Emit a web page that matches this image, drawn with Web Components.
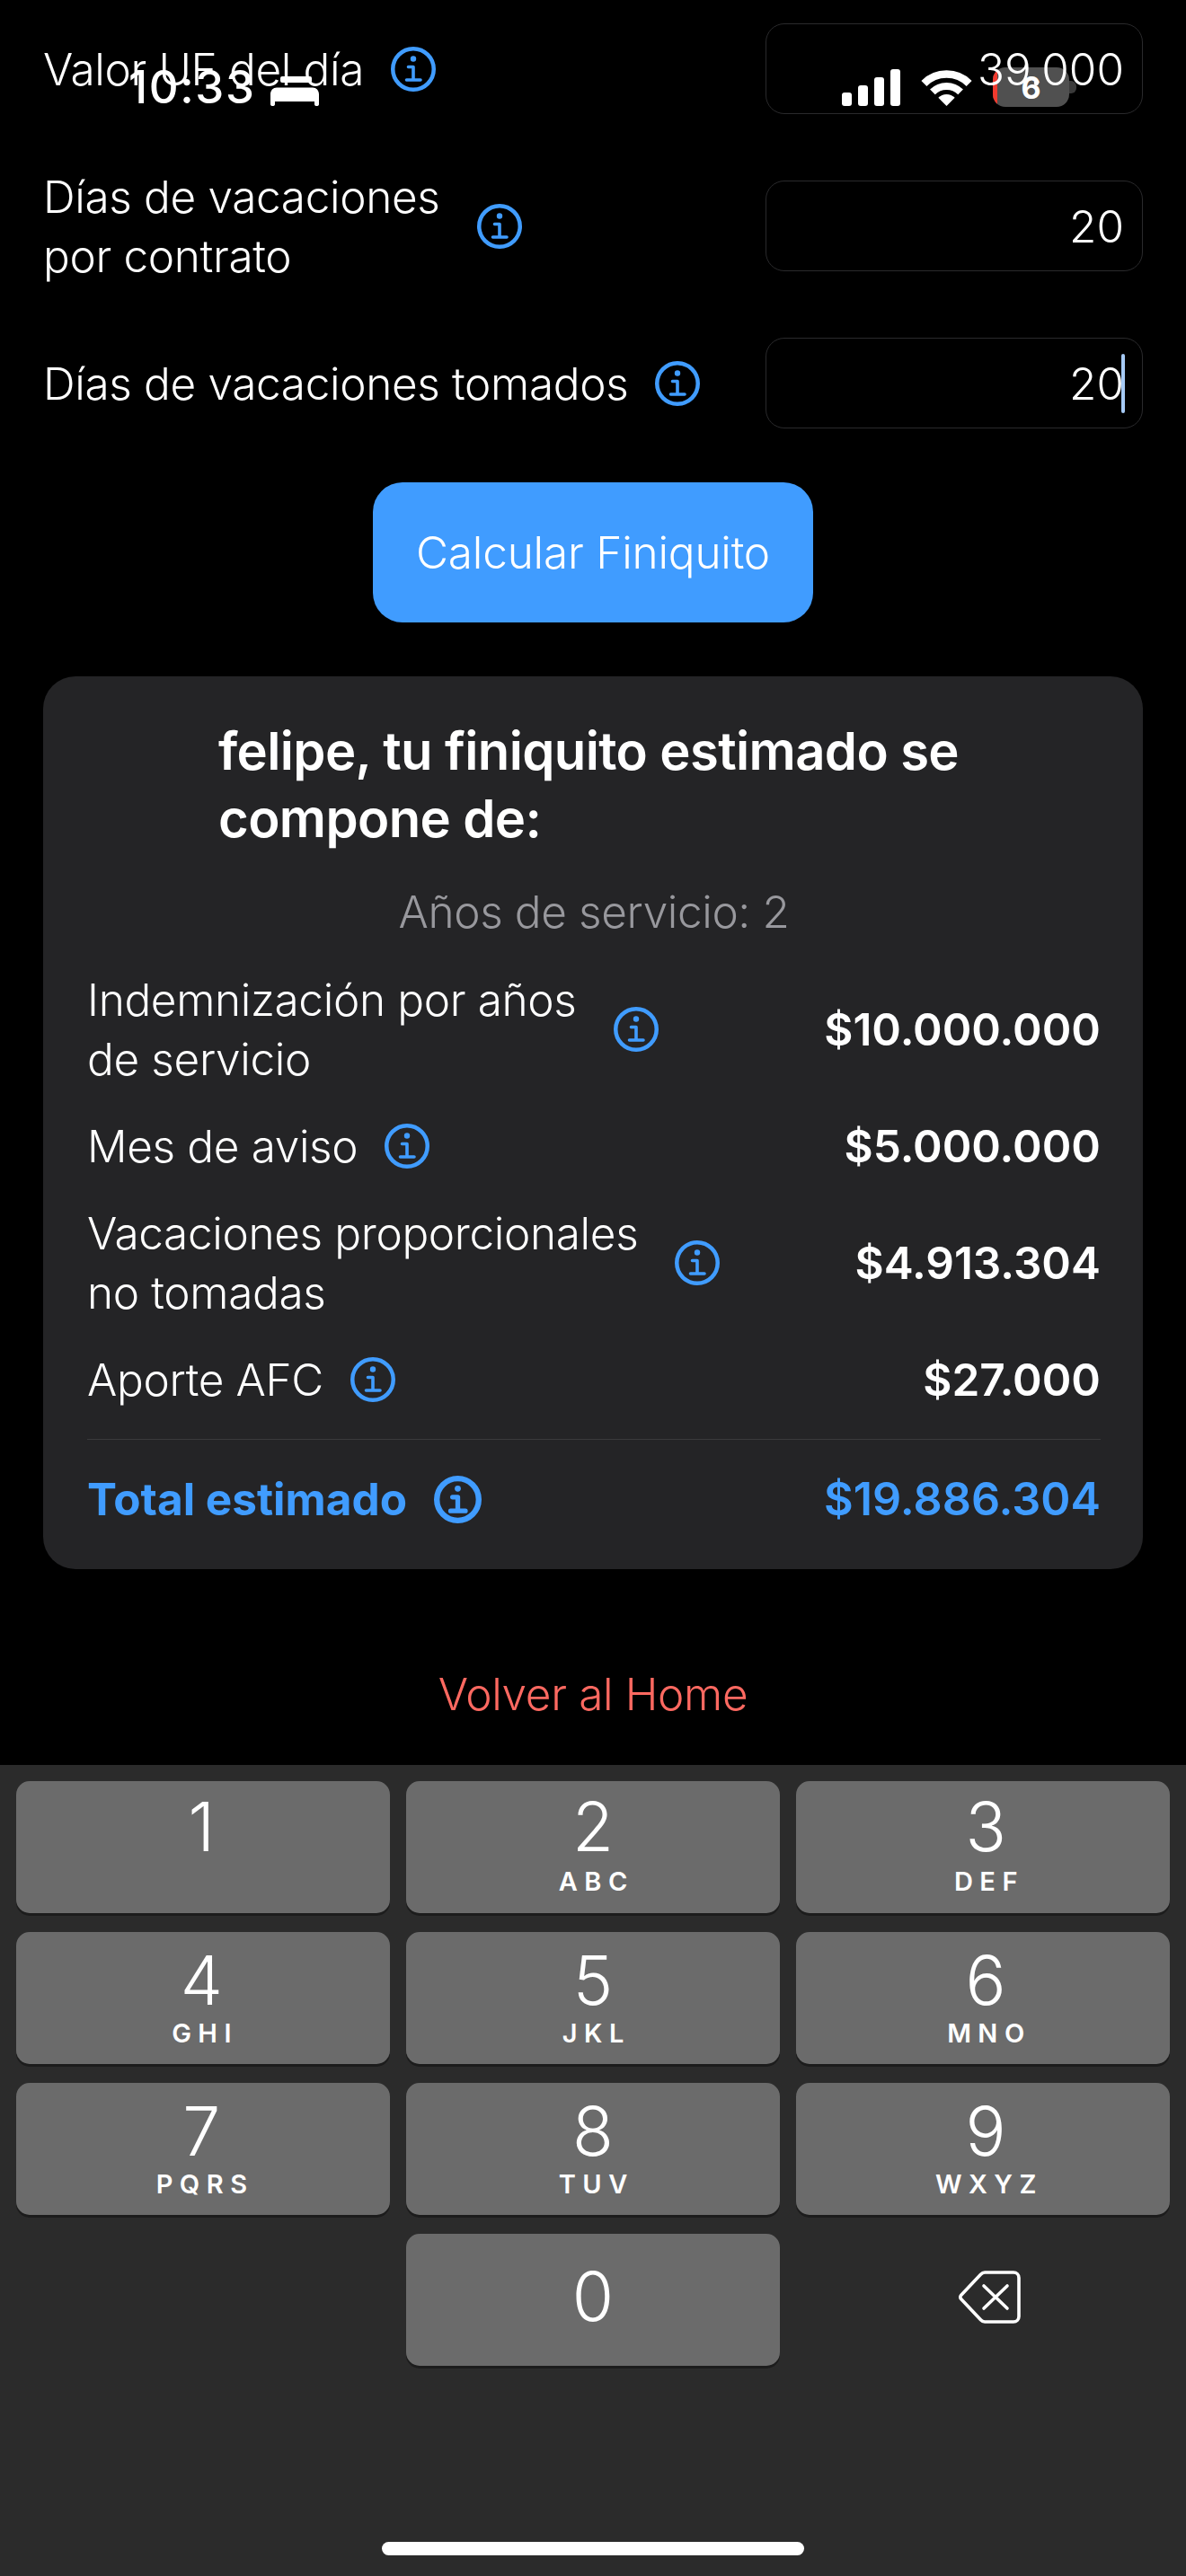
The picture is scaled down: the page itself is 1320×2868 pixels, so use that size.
<!DOCTYPE html>
<html lang="es">
<head>
<meta charset="utf-8">
<title>Finiquito</title>
<style>
    html, body { margin: 0; padding: 0; background: #000; }
    body { width: 1320px; height: 2868px; overflow: hidden; font-family: Inter, "Liberation Sans", sans-serif; color: #fff; }
</style>
</head>
<body>
<finiquito-page>
    <status-bar></status-bar>
    <field-row value="39.000">Valor UF del día</field-row>
    <field-row value="20" wrapped>Días de vacaciones<br>por contrato</field-row>
    <field-row value="20" focused>Días de vacaciones tomados</field-row>
    <calc-button>Calcular Finiquito</calc-button>
    <result-card>
        <span slot="title">felipe, tu finiquito estimado se<br>compone de:</span>
        <span slot="years">Años de servicio: 2</span>
        <result-row value="$10.000.000" wrapped>Indemnización por años<br>de servicio</result-row>
        <result-row value="$5.000.000">Mes de aviso</result-row>
        <result-row value="$4.913.304" wrapped>Vacaciones proporcionales<br>no tomadas</result-row>
        <result-row value="$27.000">Aporte AFC</result-row>
        <result-row value="$19.886.304" total>Total estimado</result-row>
    </result-card>
    <back-link>Volver al Home</back-link>
    <num-keyboard></num-keyboard>
</finiquito-page>

<script>
class InfoIcon extends HTMLElement {
    constructor() {
        super();
        this.shadow = this.attachShadow({ mode: "open" });
        var bold = this.hasAttribute("bold");
        var size = bold ? 53 : 50;
        var ring = bold ? 6 : 4.5;
        var stem = bold ? 5 : 3.6;
        this.shadow.innerHTML = `
        <style>
            :host { display: block; flex: none; width: ${size}px; height: ${size}px; }
            svg { display: block; }
        </style>
        <svg width="${size}" height="${size}" viewBox="0 0 50 50" fill="none" stroke="#409cff">
            <circle cx="25" cy="25" r="${25 - ring / 2}" stroke-width="${ring}"/>
            <circle cx="25" cy="13.5" r="3.2" fill="#409cff" stroke="none"/>
            <path d="M19.5 22.5H25V37M17.5 37H33" stroke-width="${stem}" stroke-linecap="round" stroke-linejoin="round"/>
        </svg>
        `;
    }
}

class StatusBar extends HTMLElement {
    constructor() {
        super();
        this.shadow = this.attachShadow({ mode: "open" });
        this.shadow.innerHTML = `
        <style>
            :host {
                position: absolute; top: 72px; left: 0; width: 1320px; height: 46px;
                display: flex; justify-content: space-between; align-items: flex-end;
                box-sizing: border-box; padding: 0 122px 0 143px;
            }
            .left, .right { display: flex; align-items: flex-end; }
            .left { gap: 16px; }
            .right { gap: 23px; }
            .time { font-size: 51px; line-height: 50px; font-weight: 500; letter-spacing: 1.6px; margin-bottom: -4px; }
            svg { display: block; }
            .battery { position: relative; width: 85px; height: 44px; border-radius: 14px; background: #505050; overflow: hidden;
                display: flex; align-items: center; justify-content: center; font-size: 34px; font-weight: 700; }
            .battery::before { content: ""; position: absolute; left: 0; top: 0; bottom: 0; width: 5px; background: #f03a2e; }
            .battery-wrap { display: flex; align-items: center; gap: 0; margin-bottom: -1px; }
            .cap { width: 8px; height: 14px; background: #3a3a3a; border-radius: 0 6px 6px 0; }
        </style>
        <div class="left">
            <span class="time">10:33</span>
            <svg width="54" height="33" viewBox="0 0 54 33" fill="#fff">
                <rect x="11" y="0" width="35" height="7" rx="2"/>
                <path d="M0 31V20C0 15.5 3 12.5 7 12.5H47C51 12.5 54 15.5 54 20V31C54 32.5 53 33 51.5 33C50 33 49 32.5 49 31V28H5V31C5 32.5 4 33 2.5 33C1 33 0 32.5 0 31Z"/>
            </svg>
        </div>
        <div class="right">
            <svg width="65" height="41" viewBox="0 0 65 41" fill="#fff">
                <rect x="0" y="26" width="11" height="15" rx="3"/>
                <rect x="18" y="18" width="11" height="23" rx="3"/>
                <rect x="36" y="9" width="11" height="32" rx="3"/>
                <rect x="54" y="0" width="11" height="41" rx="3"/>
            </svg>
            <svg width="57" height="40" viewBox="0 0 57 40" fill="none" stroke="#fff">
                <path d="M3.4 14.9A35.5 35.5 0 0 1 53.6 14.9" stroke-width="8.5"/>
                <path d="M12.9 24.4A22 22 0 0 1 44.1 24.4" stroke-width="8"/>
                <path d="M28.5 40L19.3 30.8A13 13 0 0 1 37.7 30.8Z" fill="#fff" stroke="none"/>
            </svg>
            <div class="battery-wrap"><div class="battery">6</div><div class="cap"></div></div>
        </div>
        `;
    }
}

class FieldRow extends HTMLElement {
    constructor() {
        super();
        this.shadow = this.attachShadow({ mode: "open" });
        var value = this.getAttribute("value");
        var caret = this.hasAttribute("focused") ? `<i class="caret"></i>` : "";
        this.shadow.innerHTML = `
        <style>
            :host { display: flex; align-items: center; justify-content: space-between; height: 101px; font-size: 49.5px; line-height: 66px; font-weight: 350; }
            .label { display: flex; align-items: center; gap: 30px; }
            :host([wrapped]) .label { gap: 41px; }
            .text { letter-spacing: -0.35px; }
            .box {
                position: relative; box-sizing: border-box; width: 420px; height: 101px; padding-right: 20px;
                border: 1.5px solid #2a2a2c; border-radius: 21px;
                display: flex; align-items: center; justify-content: flex-end;
            }
            .caret { position: absolute; right: 19px; top: 17px; width: 4px; height: 66px; border-radius: 2px; background: #a6caf5; }
        </style>
        <div class="label"><span class="text"><slot></slot></span><info-icon></info-icon></div>
        <div class="box">${value}${caret}</div>
        `;
    }
}

class CalcButton extends HTMLElement {
    constructor() {
        super();
        this.shadow = this.attachShadow({ mode: "open" });
        this.shadow.innerHTML = `
        <style>
            :host {
                display: flex; align-items: center; justify-content: center; align-self: center;
                width: 490px; height: 156px; margin-top: -14px; border-radius: 33px;
                background: #409cff; font-size: 49.5px; font-weight: 350; letter-spacing: -0.2px; color: #fff;
            }
        </style>
        <slot></slot>
        `;
    }
}

class ResultCard extends HTMLElement {
    constructor() {
        super();
        this.shadow = this.attachShadow({ mode: "open" });
        this.shadow.innerHTML = `
        <style>
            :host {
                display: flex; flex-direction: column; box-sizing: border-box; height: 994px; margin-top: -14px;
                padding: 46px 47px 0 49px; border-radius: 36px; background: #242426;
            }
            .title { margin: 0 0 0 146px; font-size: 58px; line-height: 75px; font-weight: 600; letter-spacing: -0.62px; }
            .years { margin: 33px 0 32px; text-align: center; font-size: 49.5px; line-height: 66px; font-weight: 350; letter-spacing: -0.4px; color: #98989d; }
            .rows { display: flex; flex-direction: column; gap: 31px; }
        </style>
        <div class="title"><slot name="title"></slot></div>
        <div class="years"><slot name="years"></slot></div>
        <div class="rows"><slot></slot></div>
        `;
    }
}

class ResultRow extends HTMLElement {
    constructor() {
        super();
        this.shadow = this.attachShadow({ mode: "open" });
        var total = this.hasAttribute("total");
        this.shadow.innerHTML = `
        <style>
            :host { display: flex; align-items: center; justify-content: space-between; font-size: 49.5px; line-height: 66px; font-weight: 350; }
            :host([total]) { color: #409cff; font-weight: 700; border-top: 1.5px solid #3a3a3c; padding-top: 33px; margin-top: 2px; }
            .label { display: flex; align-items: center; gap: 30px; }
            :host([wrapped]) .label { gap: 41px; }
            .text { letter-spacing: -0.35px; }
            :host([total]) .text { letter-spacing: 0; }
            .value { font-weight: 600; }
            :host([total]) .value { font-size: 50.3px; }
        </style>
        <div class="label"><span class="text"><slot></slot></span><info-icon ${total ? "bold" : ""}></info-icon></div>
        <div class="value">${this.getAttribute("value")}</div>
        `;
    }
}

class BackLink extends HTMLElement {
    constructor() {
        super();
        this.shadow = this.attachShadow({ mode: "open" });
        this.shadow.innerHTML = `
        <style>
            :host { display: block; margin-top: 32px; text-align: center; font-size: 49.5px; line-height: 66px; font-weight: 350; letter-spacing: -0.35px; color: #ff6961; }
        </style>
        <slot></slot>
        `;
    }
}

class KeyCap extends HTMLElement {
    constructor() {
        super();
        this.shadow = this.attachShadow({ mode: "open" });
        var letters = this.getAttribute("letters");
        this.shadow.innerHTML = `
        <style>
            :host {
                display: flex; flex-direction: column; align-items: center; box-sizing: border-box; height: 147px;
                padding-top: 11px; border-radius: 15px; background: #6b6b6b; box-shadow: 0 3px 0 #1c1c1c;
            }
            :host([low]) { padding-top: 14px; }
            :host([solo]) { padding-top: 30px; }
            .digit { font-size: 75px; line-height: 80px; font-weight: 300; }
            .letters { margin-top: 5px; font-size: 29px; line-height: 32px; font-weight: 600; letter-spacing: 7.5px; margin-right: -7.5px; }
            :host([low]) .letters { margin-top: 3px; }
        </style>
        <div class="digit"><slot></slot></div>
        ${letters ? `<div class="letters">${letters}</div>` : ""}
        `;
    }
}

class NumKeyboard extends HTMLElement {
    constructor() {
        super();
        this.shadow = this.attachShadow({ mode: "open" });
        var keys = [["1", ""], ["2", "ABC"], ["3", "DEF"], ["4", "GHI"], ["5", "JKL"], ["6", "MNO"], ["7", "PQRS"], ["8", "TUV"], ["9", "WXYZ"]];
        var html = keys.map((k, i) => `<key-cap letters="${k[1]}" ${i > 2 ? "low" : ""}>${k[0]}</key-cap>`).join("");
        this.shadow.innerHTML = `
        <style>
            :host {
                display: flex; flex-direction: column; align-items: center; box-sizing: border-box;
                position: absolute; left: 0; right: 0; bottom: 0; height: 903px; padding-top: 18px; background: #2b2b2b;
            }
            .keys { display: grid; grid-template-columns: repeat(3, 1fr); grid-auto-rows: 147px; gap: 21px 18.5px; width: 1284px; }
            /* the digits sit a little off centre in the outer columns */
            key-cap:nth-child(3n+1) { padding-right: 3px; }
            key-cap:nth-child(3n) { padding-left: 6px; }
            .back { display: flex; align-items: center; justify-content: center; padding: 0 0 6px 15px; }
            .home { flex: none; width: 470px; height: 15px; margin-top: 196px; border-radius: 8px; background: #fff; }
            svg { display: block; }
        </style>
        <div class="keys">
            ${html}
            <div></div>
            <key-cap solo>0</key-cap>
            <div class="back">
                <svg width="69" height="59" viewBox="0 0 69 59" fill="none" stroke="#fff" stroke-width="3.6" stroke-linecap="round" stroke-linejoin="round">
                    <path d="M2.8 27.2L24.5 4.2C25.7 2.9 27 2 29 2H61C64.5 2 67 4.5 67 8V51C67 54.5 64.5 57 61 57H29C27 57 25.7 56.1 24.5 54.8L2.8 31.8C1.6 30.4 1.6 28.6 2.8 27.2Z"/>
                    <path d="M28 17L54 42M54 17L28 42"/>
                </svg>
            </div>
        </div>
        <div class="home"></div>
        `;
    }
}

class FiniquitoPage extends HTMLElement {
    constructor() {
        super();
        this.shadow = this.attachShadow({ mode: "open" });
        this.shadow.innerHTML = `
        <style>
            :host {
                position: relative; display: block; width: 1320px; height: 2868px; box-sizing: border-box;
                background: #000; overflow: hidden;
            }
            .form { display: flex; flex-direction: column; gap: 74px; padding: 26px 48px 0 48px; }
        </style>
        <div class="form"><slot></slot></div>
        `;
    }
}

customElements.define("info-icon", InfoIcon);
customElements.define("status-bar", StatusBar);
customElements.define("field-row", FieldRow);
customElements.define("calc-button", CalcButton);
customElements.define("result-card", ResultCard);
customElements.define("result-row", ResultRow);
customElements.define("back-link", BackLink);
customElements.define("key-cap", KeyCap);
customElements.define("num-keyboard", NumKeyboard);
customElements.define("finiquito-page", FiniquitoPage);
</script>
</body>
</html>
